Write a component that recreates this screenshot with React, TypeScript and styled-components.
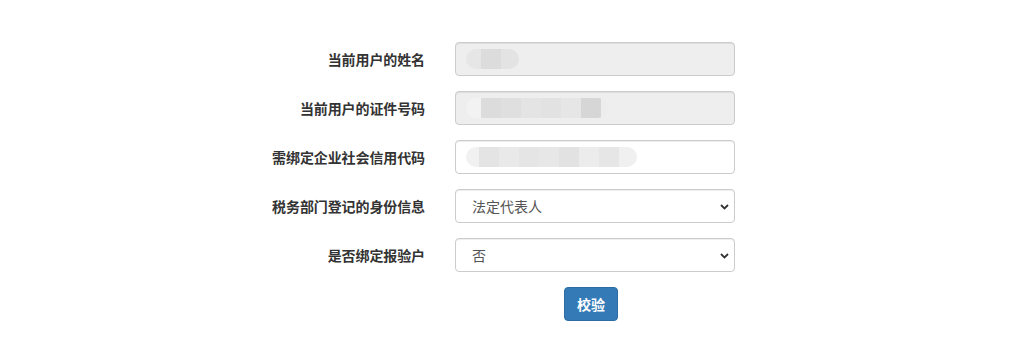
import React from 'react';
import styled, { createGlobalStyle } from 'styled-components';

interface Block {
	w: number;
	c: string;
}

// mosaic shapes standing in for the masked values
const nameBlur: Block[] = [
	{ w: 15, c: '#e6e6e6' },
	{ w: 20, c: '#dcdcdc' },
	{ w: 18, c: '#e3e3e3' },
];

const idBlur: Block[] = [
	{ w: 15, c: '#f2f2f2' },
	{ w: 20, c: '#dcdcdc' },
	{ w: 20, c: '#dfdfdf' },
	{ w: 20, c: '#e4e4e4' },
	{ w: 20, c: '#e2e2e2' },
	{ w: 20, c: '#e6e6e6' },
	{ w: 20, c: '#d6d6d6' },
	{ w: 7, c: '#ececec' },
];

const codeBlur: Block[] = [
	{ w: 13, c: '#f1f1f1' },
	{ w: 20, c: '#e4e4e4' },
	{ w: 20, c: '#e9e9e9' },
	{ w: 20, c: '#e5e5e5' },
	{ w: 20, c: '#e7e7e7' },
	{ w: 20, c: '#e2e2e2' },
	{ w: 20, c: '#ececec' },
	{ w: 20, c: '#e6e6e6' },
	{ w: 18, c: '#f0f0f0' },
];

const Chevron = () => (
	<ChevronIcon width="9" height="6" viewBox="0 0 9 6">
		<path d="M1 1 L4.5 4.5 L8 1" fill="none" stroke="#333" strokeWidth="1.8" />
	</ChevronIcon>
);

function App() {
	return (
		<>
			<GlobalStyle />
			<Page>
				<Form>
					<Label>当前用户的姓名</Label>
					<Field disabled>
						<Mosaic>
							{nameBlur.map((b, i) => <Tile key={i} $w={b.w} $c={b.c} />)}
						</Mosaic>
					</Field>

					<Label>当前用户的证件号码</Label>
					<Field disabled>
						<Mosaic>
							{idBlur.map((b, i) => <Tile key={i} $w={b.w} $c={b.c} />)}
						</Mosaic>
					</Field>

					<Label>需绑定企业社会信用代码</Label>
					<Field>
						<Mosaic>
							{codeBlur.map((b, i) => <Tile key={i} $w={b.w} $c={b.c} />)}
						</Mosaic>
					</Field>

					<Label>税务部门登记的身份信息</Label>
					<SelectWrap>
						<Select defaultValue="fr">
							<option value="fr">法定代表人</option>
							<option value="cw">财务负责人</option>
						</Select>
						<Chevron />
					</SelectWrap>

					<Label>是否绑定报验户</Label>
					<SelectWrap>
						<Select defaultValue="no">
							<option value="no">否</option>
							<option value="yes">是</option>
						</Select>
						<Chevron />
					</SelectWrap>

					<span />
					<ButtonRow>
						<Button>校验</Button>
					</ButtonRow>
				</Form>
			</Page>
		</>
	);
}

export default App;

const GlobalStyle = createGlobalStyle`
	body {
		margin: 0;
		background: #ffffff;
		font-family: "Noto Sans CJK SC", "Noto Sans", sans-serif;
		font-size: 14px;
		color: #333333;
	}
`;

const Page = styled.div`
	width: 1033px;
	height: 343px;
	padding-top: 42px;
	box-sizing: border-box;
`;

const Form = styled.div`
	display: grid;
	grid-template-columns: 425px 280px;
	grid-auto-rows: 34px;
	column-gap: 30px;
	row-gap: 15px;
`;

const Label = styled.div`
	display: flex;
	align-items: center;
	justify-content: flex-end;
	font-size: 14px;
	font-weight: 700;
	color: #333333;
	letter-spacing: -0.1px;
`;

const Field = styled.div<{ disabled?: boolean }>`
	display: flex;
	align-items: center;
	padding: 0 10px;
	box-sizing: border-box;
	border: 1px solid #cccccc;
	border-radius: 4px;
	background: ${p => (p.disabled ? '#eeeeee' : '#ffffff')};
	box-shadow: inset 0 1px 1px rgba(0, 0, 0, 0.075);
`;

const Mosaic = styled.div`
	display: flex;
	height: 20px;
	border-radius: 10px;
	overflow: hidden;
	filter: blur(0.6px);
`;

const Tile = styled.div<{ $w: number; $c: string }>`
	width: ${p => p.$w}px;
	height: 100%;
	background: ${p => p.$c};
`;

const SelectWrap = styled.div`
	position: relative;
	display: flex;
`;

const Select = styled.select`
	appearance: none;
	width: 100%;
	height: 34px;
	padding: 0 12px 0 16px;
	border: 1px solid #cccccc;
	border-radius: 4px;
	background: #ffffff;
	box-shadow: inset 0 1px 1px rgba(0, 0, 0, 0.075);
	font-family: "Noto Sans CJK SC", "Noto Sans", sans-serif;
	font-size: 14px;
	color: #555555;
	outline: none;
`;

const ChevronIcon = styled.svg`
	position: absolute;
	right: 6px;
	top: 15px;
	pointer-events: none;
`;

const ButtonRow = styled.div`
	display: flex;
	align-items: flex-start;
	padding-left: 109px;
`;

const Button = styled.button`
	height: 34px;
	padding: 0 12px;
	border: 1px solid #2e6da4;
	border-radius: 4px;
	background: #337ab7;
	color: #ffffff;
	font-family: "Noto Sans CJK SC", "Noto Sans", sans-serif;
	font-size: 14px;
	font-weight: 700;
	cursor: pointer;
`;
